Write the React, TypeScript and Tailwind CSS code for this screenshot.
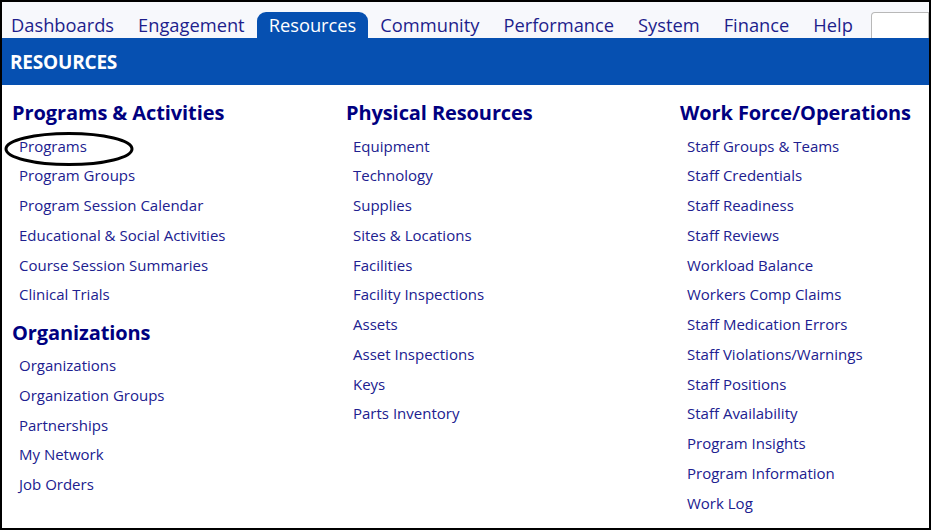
import React from "react";

const navItems = ["Dashboards", "Engagement", "Resources", "Community", "Performance", "System", "Finance", "Help"];

type Section = { title: string; links: string[] };

const columns: Section[][] = [
  [
    {
      title: "Programs & Activities",
      links: ["Programs", "Program Groups", "Program Session Calendar", "Educational & Social Activities", "Course Session Summaries", "Clinical Trials"],
    },
    {
      title: "Organizations",
      links: ["Organizations", "Organization Groups", "Partnerships", "My Network", "Job Orders"],
    },
  ],
  [
    {
      title: "Physical Resources",
      links: ["Equipment", "Technology", "Supplies", "Sites & Locations", "Facilities", "Facility Inspections", "Assets", "Asset Inspections", "Keys", "Parts Inventory"],
    },
  ],
  [
    {
      title: "Work Force/Operations",
      links: [
        "Staff Groups & Teams",
        "Staff Credentials",
        "Staff Readiness",
        "Staff Reviews",
        "Workload Balance",
        "Workers Comp Claims",
        "Staff Medication Errors",
        "Staff Violations/Warnings",
        "Staff Positions",
        "Staff Availability",
        "Program Insights",
        "Program Information",
        "Work Log",
      ],
    },
  ],
];

export default function App() {
  const active = "Resources";

  return (
    <div
      className="relative w-[931px] h-[530px] border-2 border-black bg-white overflow-hidden flex flex-col"
      style={{ fontFamily: '"Open Sans", "Noto Sans", sans-serif' }}
    >
      {/* top nav */}
      <div className="h-[36px] shrink-0 bg-[#f7f8fc] flex items-end">
        <div className="flex items-end -ml-[3px]">
          {navItems.map((item) => (
            <div
              key={item}
              className={`h-[26px] px-3 flex items-center text-[18.3px] leading-none ${
                item === active ? "bg-[#0650b1] text-white rounded-t-[9px]" : "text-[#1e1e8c]"
              }`}
            >
              {item}
            </div>
          ))}
        </div>
        <div className="ml-[6px] h-[26px] flex-1 bg-white border border-b-0 border-[#b8b8b8] rounded-tl-[4px]" />
      </div>

      {/* title bar */}
      <div className="h-[47px] shrink-0 bg-[#0650b1] flex items-center pl-[8px] pt-[1px]">
        <span className="text-white font-bold text-[19px] tracking-[-0.2px]">RESOURCES</span>
      </div>

      {/* menu columns */}
      <div className="grid grid-cols-[334px_334px_1fr] px-[10px] pt-[15px]">
        {columns.map((col, i) => (
          <div key={i} className="flex flex-col">
            {col.map((sec, j) => (
              <div key={sec.title} className={j > 0 ? "mt-[10px]" : ""}>
                <h2 className="text-[20px] font-bold text-[#000080] leading-[26px] tracking-[-0.1px]">{sec.title}</h2>
                <ul className="mt-[5px]">
                  {sec.links.map((l) => (
                    <li key={l} className="pl-[7px] h-[29.75px] flex items-center text-[15px] text-[#20208f]">
                      {l}
                    </li>
                  ))}
                </ul>
              </div>
            ))}
          </div>
        ))}
      </div>

      {/* annotation ring around Programs */}
      <svg className="absolute left-[1px] top-[129px]" width="132" height="36" viewBox="0 0 132 36">
        <ellipse cx="66" cy="18" rx="63" ry="15.5" fill="none" stroke="black" strokeWidth="3" />
      </svg>
    </div>
  );
}
